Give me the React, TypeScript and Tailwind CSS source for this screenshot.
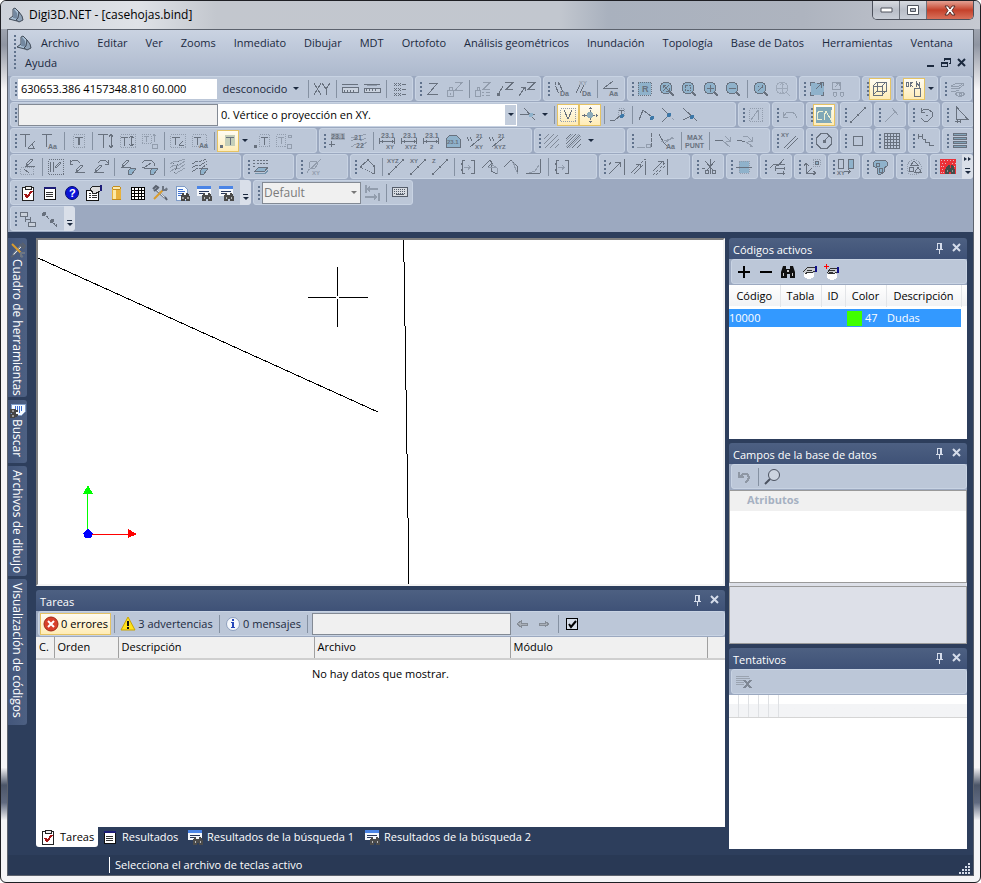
import type { ReactNode } from "react"
import { clsx } from "clsx"

const INK = "#68717e"
const SOFT = "#929dad"
const BLUE = "#8fb2cb"

interface StrokeProps {
  d: string
  c?: string
  w?: number
  f?: string
  dash?: string
}

function S({ d, c = INK, w = 1, f = "none", dash }: StrokeProps) {
  return <path d={d} stroke={c} strokeWidth={w} fill={f} strokeDasharray={dash} />
}

interface GlyphProps {
  x: number
  y: number
  s?: number
  c?: string
  children: string
}

function G({ x, y, s = 7, c = INK, children }: GlyphProps) {
  return (
    <text x={x} y={y} fontSize={s} fill={c} fontFamily="Liberation Sans, sans-serif" fontWeight="bold">
      {children}
    </text>
  )
}

const lens = (
  <>
    <circle cx="7" cy="7" r="6" fill={BLUE} stroke={INK} />
    <S d="M11 11l4 4" w={2} />
  </>
)
const parallel = <S d="M2.500 1v3M2.500 5l3 7M6 2l3.500 8M5.500 1v3" />
const binoculars = (
  <>
    <path d="M1 8l2-6h3v3h4v-3h3l2 6v6h-5v-4h-3v4h-6z" fill="#111" />
    <path d="M3 9h1v3h-1zM12 9h1v3h-1zM7 6h2v2h-2z" fill="#ccc" />
  </>
)
const sheetBinoculars = (
  <>
    <path d="M2 1h8l3 3v11h-11z" fill="#f6fbff" stroke="#7f9cc8" />
    <S d="M4 4.500h5M4 6.500h7M4 8.500h4M4 10.500h3" c="#3d6fd0" />
    <path d="M7 12l1-4h2v2h2v-2h2l2 4v4h-4v-2h-1v2h-4z" fill="#454545" />
    <path d="M8 12h2v2h-2zM13 12h2v2h-2z" fill="#999" />
  </>
)
const listBinoculars = (
  <>
    <path d="M1 1h14v10h-14z" fill="#f4f7fb" />
    <path d="M1 1h14v3h-14z" fill="#4a84e6" />
    <S d="M3 6.500h10M3 8.500h6" c="#26365c" />
    <path d="M6 12l1-4h2v2h3v-2h2l2 4v4h-4v-2h-2v2h-4z" fill="#4a4a4a" />
    <path d="M8 12h1v2h-1zM13 12h1v2h-1z" fill="#bbb" />
  </>
)
const clipboard = (
  <>
    <path d="M2.500 2.500h11v13h-11z" fill="#fff" stroke="#222" />
    <path d="M5 1h6v3h-6z" fill="#eee" stroke="#222" />
    <S d="M5 9l2 3l5-6" c="#a51616" w={2} />
  </>
)
const textBox = (
  <>
    <S d="M3.500 1.500h11v13h-11z" c={SOFT} dash="1 1" />
    <S d="M5 4.500h8M9.500 4v8M8.500 4v8" />
  </>
)
const dim = (
  <>
    <G x={2} y={5} s={7}>23.1</G>
    <S d="M.500 5v6M15.500 5v6M1 8.500h14M3 7v3M13 7v3" />
  </>
)
const pen = <S d="M5 9l5-5l2 1l-5 5zM4 11.500h10M5 11l2-1" />
const eraser = <path d="M8 12l3-3h4v2l-3 4h-4z" fill={BLUE} stroke={INK} />
const slants = <S d="M0 6l5-5M0 11l10-10M1 15l13-13M6 15l9-9M11 15l4-4" />
const toolsGlyph = (
  <>
    <S d="M4 5l9 8" c="#7b8491" w={2} />
    <S d="M4 4l10 10" c="#dfe3e8" />
    <S d="M11 5l-9 9" c="#d99b2e" w={2} />
    <S d="M1 4l3-3l3 2M2 6l4-3" c="#59616e" w={2} />
    <S d="M11 1v4h4M14 3l1 2" c="#6d7683" w={2} />
    <S d="M13 12l2 3" c="#59616e" w={2} />
  </>
)

const icons: Record<string, ReactNode> = {
  xy: <S d="M0 2l7 12M7 2l-7 12M8 2l4 6l4-6M12 8v6" />,
  ruler: (
    <>
      <path d="M0 6h16v5h-16z" fill="#cbd3df" stroke={INK} />
      <S d="M0 3.500h16M2.500 9v2M5.500 9v2M8.500 9v2M11.500 9v2" />
    </>
  ),
  rulerSplit: (
    <>
      <path d="M0 7h16v4h-16z" fill="#cbd3df" stroke={INK} />
      <S d="M0 3.500h16M2.500 8v2M5.500 8v2M8.500 8v2M11.500 8v2" />
      <S d="M3 4.500h10" c={SOFT} />
    </>
  ),
  xyzList: (
    <>
      <S d="M2 2l3 3M5 2l-3 3M6 2l3 3M9 2l-3 3M2 7l3 3M5 7l-3 3M6 7l3 3M9 7l-3 3M2 12l3 3M5 12l-3 3M6 12l3 3M9 12l-3 3" />
      <S d="M10 3.500h4M10 8.500h4M10 13.500h4" />
    </>
  ),
  z: <S d="M4 2.500h8l-9 11h10" />,
  lockZ: (
    <>
      <S d="M8 1.500h7l-7 8h8" c={SOFT} />
      <S d="M.500 9.500h6v6h-6zM2 9v-3h3v3M3.500 12v2" c={SOFT} />
    </>
  ),
  lockZList: (
    <>
      <S d="M8 1.500h7l-7 7h7" c={SOFT} />
      <S d="M.500 9.500h5v6h-5zM2 9v-3h2v3M7 11.500h2M11 11.500h4M7 14.500h2M11 14.500h4" c={SOFT} />
    </>
  ),
  arrowZ: (
    <>
      <S d="M8 1.500h8l-7 7h7M1 14l5-9" />
      <path d="M0 12h3v3h-3z" fill={INK} />
    </>
  ),
  arrowUpZ: <S d="M8 1.500h8l-7 7h7M0 15l6-9M6 10v-4h-4" />,
  parDa: (
    <>
      {parallel}
      <G x={7} y={15}>Da</G>
    </>
  ),
  parXyDa: (
    <>
      <S d="M1 12l4-8M5 12l4-8" />
      <G x={4} y={4} s={6} c={SOFT}>XY</G>
      <G x={7} y={15}>Da</G>
    </>
  ),
  angleAa: (
    <>
      <S d="M0 7.500h15M1 7l9-7" />
      <G x={6} y={15}>Aa</G>
    </>
  ),
  zoomR: (
    <>
      <path d="M1 1h13v13h-13z" fill={BLUE} stroke={INK} strokeDasharray="1 1" />
      <G x={5} y={11} s={9}>R</G>
    </>
  ),
  zoomAll: (
    <>
      {lens}
      <S d="M4 4l6 6M10 4l-6 6M4 7v-3h3M7 10h3v-3" />
    </>
  ),
  zoomBox: (
    <>
      {lens}
      <S d="M4.500 4.500h5v5h-5z" dash="2 1" />
    </>
  ),
  zoomIn: (
    <>
      {lens}
      <S d="M4 7.500h7M7.500 4v7" />
    </>
  ),
  zoomOut: (
    <>
      {lens}
      <S d="M4 7.500h7" />
    </>
  ),
  zoomBack: (
    <>
      {lens}
      <S d="M5 10l4-4M5 5l1 1M9 4v3" />
    </>
  ),
  pan: (
    <g opacity="0.7">
      <circle cx="7" cy="7" r="6" fill="none" stroke={SOFT} />
      <S d="M1 7.500h12M7.500 1v12M5 4l2-2l2 2M5 11l2 2l2-2M11 11l4 4" c={SOFT} />
    </g>
  ),
  extent: (
    <>
      <path d="M2 2h13v12h-13z" fill={BLUE} />
      <S d="M1.500 5v-4h4M14.500 5v-4h-4M1.500 11v3.500h3M14.500 11v3.500h-3M7 8l5-5M8 2.500h4.500v4" />
    </>
  ),
  extentEyes: (
    <>
      <S d="M1.500 1.500h8v7h-8zM4 6l4-4M5 2h3v3" c={SOFT} />
      <S d="M3 11h2l1 2l-1 2h-2l-1-2zM10 11h2l1 2l-1 2h-2l-1-2z" c={SOFT} />
    </>
  ),
  cube: <S d="M1.500 5.500h9v9h-9zM5.500 1.500h9v9h-9zM1 5l4-4M10 5l4-4M1 14l4-4M10 14l4-4" />,
  docN: (
    <>
      <S d="M0 1.500h2v4h-2zM4 1v5M4 3l3-2M4 3l3 3M10.500 6v-5l3 5v-5" />
      <path d="M8.500 7.500h6v8h-6z" fill="none" stroke={INK} />
    </>
  ),
  layersEye: (
    <>
      <S d="M1 5l6-3h7l-5 3zM1 7.500h8l5-4M1 10h5l3-1" c={SOFT} />
      <S d="M5 13l3-2h4l3 2l-3 2h-4zM9 12h2v2h-2z" c={SOFT} />
    </>
  ),
  cursorCut: (
    <>
      <S d="M0 7.500h15M4 1l11 12" />
      <circle cx="11" cy="8" r="2" fill={BLUE} />
    </>
  ),
  vBox: (
    <>
      <S d="M.500 1.500h15v13h-15z" c={SOFT} dash="1 1" />
      <S d="M4 3l4 9l4-9" />
    </>
  ),
  move: (
    <>
      <circle cx="8" cy="8" r="3" fill="#8cabba" />
      <S d="M8.500 0v5M8.500 11v5M0 8.500h5M11 8.500h5" dash="2 1" />
      <S d="M7 2l1-1l2 1M7 14l1 1l2-1M2 7v3M14 7v3" />
    </>
  ),
  nodeT: (
    <>
      <S d="M8.500 1.500h6v7h-6z" c={SOFT} dash="1 1" />
      <S d="M9 3.500h5M11.500 3v6M0 14l5-1l6-5" />
      <circle cx="12" cy="9" r="2" fill="#3d78a8" />
    </>
  ),
  vertexEnd: (
    <>
      <S d="M1 13l4-10l9 7" />
      <circle cx="14" cy="11" r="2" fill="#3d78a8" />
    </>
  ),
  vertexMid: (
    <>
      <S d="M2 1l7 7l-7 7" />
      <S d="M9 8l6 6" c={SOFT} dash="1 1" />
      <circle cx="9" cy="8" r="2" fill="#3d78a8" />
    </>
  ),
  vertexCross: (
    <>
      <S d="M1 1l14 13M1 13l8-4" />
      <circle cx="10" cy="10" r="2" fill="#3d78a8" />
    </>
  ),
  italicBox: (
    <>
      <S d="M1.500 1.500h13v13h-13z" c={SOFT} dash="1 1" />
      <S d="M3 13l7-10M10.500 3v10" c={SOFT} />
    </>
  ),
  undoPale: <S d="M1 5v5h5M1 10l4-5h5l3 2l2 4" c={SOFT} />,
  can: (
    <>
      <path d="M0 0h16v16h-16z" fill="#82a9b7" />
      <S d="M7 4h-4l-2 3v5h5M8 13v-4l2-5M10 4l5 9V3" c="#eff0d2" />
    </>
  ),
  segment: (
    <>
      <S d="M1 15l14-14" />
      <path d="M0 14h2v2h-2zM14 0h2v2h-2zM7 7h2v2h-2z" fill={INK} />
    </>
  ),
  segmentPale: <S d="M1 15l10-10M8 1l6 7" c={SOFT} />,
  rotate: <S d="M3 1v4h4M3 5l3-3h4l4 3v5l-4 4h-4l-3-3M7.500 8h2" />,
  mirror: <S d="M4.500 0v12h11zM5 13v3M8 12v4M3 14.500h5" />,
  tAngle: <S d="M0 1.500h10M5.500 1v13M8 15l7-7M8 15.500h7M12 11l2 4" />,
  tAa: (
    <>
      <S d="M0 1.500h10M4.500 1v13" />
      <G x={6} y={16}>Aa</G>
    </>
  ),
  tBox: textBox,
  tHeight: <S d="M0 1.500h10M5.500 1v14M13.500 1v14M11 4l2-3l2 3M11 12l2 3l2-3" />,
  tHeightBox: (
    <>
      <S d="M.500 1.500h15v13h-15z" c={SOFT} dash="1 1" />
      <S d="M1 4.500h7M4.500 4v9M11.500 3v10M9 5l2-2l3 2M9 11l2 2l3-2" />
    </>
  ),
  tCopy: (
    <>
      <S d="M0 1.500h9v9h-9z" c={SOFT} dash="1 1" />
      <S d="M2 3.500h5M4.500 3v6M12.500 1v8M11 3l1-2l2 2M10 11h5v4h-5z" c={SOFT} />
    </>
  ),
  tBoxAngle: (
    <>
      <S d="M.500 1.500h15v13h-15z" c={SOFT} dash="1 1" />
      <S d="M2 4.500h8M5.500 4v8M9 12l4-4M9 12.500h5" />
    </>
  ),
  tBoxAa: (
    <>
      <S d="M.500 1.500h14v12h-14z" c={SOFT} dash="1 1" />
      <S d="M2 4.500h7M5.500 4v8" />
      <G x={7} y={15}>Aa</G>
    </>
  ),
  tDot: (
    <>
      <path d="M5 2h10v11h-10z" fill="#c5cfb9" />
      <path d="M0 12h3v3h-3z" fill={INK} />
      <S d="M6 4.500h8M10.500 4v8" />
    </>
  ),
  tDotBox: (
    <>
      <S d="M5.500 1.500h10v12h-10z" c={SOFT} dash="1 1" />
      <path d="M0 12h3v3h-3z" fill={INK} />
      <S d="M7 4.500h7M10.500 4v8" />
    </>
  ),
  tPale: (
    <>
      <S d="M.500 1.500h9v12h-9z" c={SOFT} dash="1 1" />
      <S d="M2 4.500h6M5.500 4v7M12 2h3v2h-3zM11 11h4v4h-4z" c={SOFT} />
    </>
  ),
  numPlus: (
    <>
      <path d="M2 0h14v7h-14z" fill="#a3adbb" />
      <G x={2} y={6} s={7}>23.1</G>
      <S d="M2.500 8v6M0 11.500h6" />
    </>
  ),
  numStack: (
    <>
      <S d="M0 5l5-1M0 8l7-3M9 3l6-2M9 8l6-3M0 14l5-3M10 13l6-4" c={SOFT} />
      <G x={3} y={7} s={7}>21</G>
      <G x={5} y={15} s={7}>22</G>
    </>
  ),
  dimXy: (
    <>
      {dim}
      <G x={7} y={16} s={6}>XY</G>
    </>
  ),
  dimXyz: (
    <>
      {dim}
      <G x={4} y={16} s={6}>XYZ</G>
    </>
  ),
  dimZ: (
    <>
      {dim}
      <G x={7} y={16} s={6}>2</G>
    </>
  ),
  dome: (
    <>
      <path d="M1 14v-8l4-4h6l4 4v8z" fill={BLUE} stroke={INK} />
      <G x={2} y={11} s={6}>23.1</G>
    </>
  ),
  slopeXy: (
    <>
      <S d="M0 4l2 4M3 4l2 4M3 14l11-9" />
      <G x={9} y={5} s={6}>21</G>
      <G x={8} y={16} s={6}>XY</G>
    </>
  ),
  slopeXyz: (
    <>
      <S d="M0 4l2 4M3 4l2 4M3 14l11-9" />
      <G x={9} y={5} s={6}>21</G>
      <G x={5} y={16} s={6}>XYZ</G>
    </>
  ),
  hatch: <g opacity="0.7">{slants}</g>,
  hatchDense: (
    <>
      {slants}
      <S d="M0 8l7-7M0 14l13-13M3 15l12-12" c={SOFT} />
    </>
  ),
  perpend: (
    <>
      <S d="M0 14.500h9" c={SOFT} dash="8 1" />
      <S d="M9.500 11.500h4v3h-4z" c={SOFT} />
      <S d="M14.500 0v15" dash="4 1" />
    </>
  ),
  slopeAa: (
    <>
      <S d="M0 1l5 9l3 3" />
      <S d="M2 9l13-4M6 10l8-6" c={SOFT} />
      <G x={7} y={16}>Aa</G>
    </>
  ),
  maxPunt: (
    <>
      <G x={0} y={7} s={7}>MAX</G>
      <G x={-2} y={15} s={7}>PUNT</G>
    </>
  ),
  bend: (
    <>
      <S d="M0 7.500h8" />
      <S d="M8 8l7 6M10 3l5 5M15 4v4h-4" c={SOFT} />
    </>
  ),
  bendDouble: (
    <>
      <S d="M0 7.500h5M5 8l3 1" />
      <S d="M6 3h4l5 5M15 4v4h-4M9 9l6 4M13 13h3" c={SOFT} />
    </>
  ),
  xyLines: (
    <>
      <G x={-1} y={4} s={6}>XY</G>
      <S d="M2 15l12-12M5 16l11-11" />
    </>
  ),
  circle: (
    <>
      <S d="M5 .500h6l4.500 4.500v6l-4.500 4.500h-6l-4.500-4.500v-6z" />
      <S d="M8 8l5-5" />
      <path d="M7 7h3v3h-3z" fill={INK} />
    </>
  ),
  square: <S d="M3.500 3.500h9v9h-9z" />,
  gridIcon: (
    <S d="M.500 .500h15v15h-15zM3.500 0v16M6.500 0v16M9.500 0v16M12.500 0v16M0 3.500h16M0 6.500h16M0 9.500h16M0 12.500h16" />
  ),
  stairs: <S d="M.500 1v5M4.500 1v5M0 3.500h5M5 6.500h2v3h4v3h5" />,
  stripes: (
    <path
      d="M1.500 .500h13v2h-13zM1.500 4.500h13v2h-13zM1.500 8.500h13v2h-13zM1.500 12.500h13v2h-13z"
      fill="#83a4b9"
      stroke={INK}
    />
  ),
  penBox: (
    <>
      <g transform="translate(1 -4)">{pen}</g>
      <S d="M.500 8.500h13v7h-13z" c={SOFT} dash="1 1" />
      <S d="M4 10l5 4" />
    </>
  ),
  penSquare: (
    <>
      <S d="M.500 .500h15v15h-15z" dash="1 1" />
      <S d="M2.500 3v10M5.500 3v10M7 8l5-5l1 1l-5 5z" />
    </>
  ),
  penUndo: (
    <>
      <g transform="translate(1 2)">{pen}</g>
      <S d="M0 4l3-3h4l3 3M0 1v4h3" />
    </>
  ),
  penRedo: (
    <>
      <g transform="translate(-2 2)">{pen}</g>
      <S d="M6 4l3-3h4l3 3M16 1v4h-3" />
    </>
  ),
  penErase: (
    <>
      <g transform="translate(-3 -3)">{pen}</g>
      {eraser}
    </>
  ),
  penLoopErase: (
    <>
      <S d="M0 4l3-3h6l3 3v3M0 8h3M3 8l6-4" />
      <S d="M2 9.500h8" />
      {eraser}
    </>
  ),
  contours: (
    <>
      <S d="M0 5l5-3h4l6-2M0 9l4-3h5l6-4M0 13l5-4h5l5-4M5 15l5-3l5-3" c={SOFT} />
      <S d="M3 4l6 10M9 2l-5 12" c={INK} dash="1 2" />
    </>
  ),
  contoursErase: (
    <>
      <S d="M0 5l5-3h4l6-2M0 9l4-3h5l6-4M0 13l5-4h5l5-4" c={INK} dash="3 1" />
      {eraser}
    </>
  ),
  layers: (
    <>
      <S d="M0 1.500h2M4 1.500h11M0 4.500h2M4 4.500h11M0 7.500h2" dash="2 1" />
      <path d="M2 12l4-4h9l-3 4z" fill={BLUE} stroke={INK} />
      <path d="M2 14h10l3-4v2l-3 3h-10z" fill="#7494ac" />
    </>
  ),
  curveXy: (
    <>
      <S d="M1 14l2-4M3 4l2-2h5l2 3l-3 4h-5l-1-3zM15 0l-13 12" c={SOFT} />
      <G x={6} y={16} s={6} c={SOFT}>XY</G>
    </>
  ),
  polygon: (
    <>
      <S d="M0 8l8-7l6 6v8" />
      <S d="M0 8l14 7" dash="1 1" />
      <path d="M7 0h2v2h-2zM13 6h2v2h-2zM0 7h2v2h-2z" fill={INK} />
    </>
  ),
  lineXyz: (
    <>
      <S d="M1 15l14-14" />
      <path d="M0 14h2v2h-2zM14 0h2v2h-2zM7 7h2v2h-2z" fill={INK} />
      <G x={-1} y={4} s={6}>XYZ</G>
    </>
  ),
  lineXy: (
    <>
      <S d="M1 15l14-14" />
      <path d="M0 14h2v2h-2zM14 0h2v2h-2zM7 7h2v2h-2z" fill={INK} />
      <G x={0} y={4} s={6}>XY</G>
    </>
  ),
  lineZ: (
    <>
      <S d="M1 15l14-14" />
      <path d="M0 14h2v2h-2zM14 0h2v2h-2zM7 7h2v2h-2z" fill={INK} />
      <G x={0} y={4} s={6}>Z</G>
    </>
  ),
  bracketJoin: (
    <>
      <S d="M5 1.500h-3v13h3M11 1.500h3v13h-3M1.500 4v2M1.500 10v2M14.500 4v2M14.500 10v2" />
      <S d="M4 8.500h7M8 6l2 2l-2 3" c={SOFT} />
    </>
  ),
  vertexMove: (
    <>
      <S d="M0 9l8-8l3 4M6 8l3-3v7l6 3" />
      <S d="M6 8.500h9M9 5l6 4v6" c={SOFT} />
    </>
  ),
  vertexPull: (
    <>
      <S d="M0 8l7-7l6 6v8" />
      <S d="M8 2l6 13M10 4v4" c={SOFT} />
    </>
  ),
  corner: (
    <>
      <S d="M0 14.500h14M14.500 0v14" />
      <S d="M3 14l6-2l4-6" c={SOFT} />
    </>
  ),
  arrowWall: <S d="M0 15l11-11M6 3.500h5M11 3v5M15.500 0v16M0 6l2-3" />,
  arrowsWall: (
    <>
      <S d="M0 14l9-9M5 5h4v4M3 15l9-9M14.500 3v13" />
      <S d="M10 4l4-4M14 0v3" c={INK} dash="1 1" />
    </>
  ),
  arrowsDash: (
    <>
      <S d="M0 12l10-10M5 2h5v4M14.500 0v16" />
      <S d="M0 16l13-13M3 16l9-9" dash="1 1" />
    </>
  ),
  scissors: <S d="M3 2l8 9M13 2l-8 9M8.500 0v15M3 11h3v3h-3zM10 11h3v3h-3zM0 9h3" />,
  splitBlue: (
    <>
      <path d="M3 2h10v12h-10z" fill={BLUE} stroke={SOFT} strokeDasharray="1 1" />
      <S d="M0 8.500h16" />
    </>
  ),
  stepArrows: <S d="M0 9l4-4l4 2l6-7M6 5h9M6 9.500h8M6 7l-1 2l1 3M14 8v3M7 14h8M13 12v4" />,
  moveOrigin: (
    <>
      <S d="M2.500 15v-10M0 7l2-3l3 3M2 14.500h9M9 12l3 2l-3 2M3 14l5-5" />
      <path d="M9 0h7v7h-7z" fill="none" stroke={SOFT} strokeDasharray="1 1" />
      <path d="M11 2h3v3h-3z" fill={BLUE} stroke={INK} />
    </>
  ),
  swapXy: (
    <>
      <S d="M.500 .500h5v9h-5z" />
      <path d="M10.500 .500h5v9h-5z" fill={BLUE} stroke={INK} />
      <S d="M6 12.500h7M10 10l2 2l-2 3" />
      <G x={-1} y={16} s={6}>XY</G>
    </>
  ),
  blob: (
    <>
      <path d="M1 4l3-3l4 1l5-1l2 2v4l-3 2v4l-3 2h-3l-1-6l-4-2z" fill={BLUE} stroke={INK} />
      <S d="M4 4h3v3h-3zM7 9h3v4h-3z" />
    </>
  ),
  shapes: (
    <>
      <S d="M1 6l3-4l4-2l5 3l3 5l-3 6l-5 2l-5-1l-2-5z" c={SOFT} dash="1 1" />
      <S d="M5 6l3-4l4 4zM3.500 8.500h4v4h-4zM9 13l3-5l3 5z" />
    </>
  ),
  redGrid: (
    <>
      <path d="M0 0h16v15h-16z" fill="#ea3038" />
      <path
        d="M1 1h1v1h-1zM4 1h1v1h-1zM7 1h1v1h-1zM10 1h1v1h-1zM13 1h1v1h-1zM2 4h1v1h-1zM5 4h1v1h-1zM12 4h1v1h-1zM15 4h1v1h-1zM1 7h1v1h-1zM3 7h1v1h-1zM14 7h1v1h-1zM2 10h1v1h-1zM1 13h1v1h-1zM3 13h1v1h-1z"
        fill="#e0b6bf"
      />
      <path d="M5 15v-4l3-5h2v3h1v-3h2l2 5v4h-4v-2h-2v2z" fill="#444c4a" />
      <path d="M7 11h1v2h-1zM12 11h1v2h-1z" fill="#8d9895" />
    </>
  ),
  clipboard,
  sheet: (
    <>
      <path d="M2.500 2.500h11v12h-11z" fill="#fff" stroke="#111" />
      <path d="M2 2h12v2h-12z" fill="#1c1c78" />
      <S d="M4 7.500h7M4 9.500h7M4 11.500h7" c="#333" />
    </>
  ),
  help: (
    <>
      <circle cx="8" cy="8" r="6.500" fill="#0a14d8" stroke="#040a6e" />
      <G x={5} y={12} s={11} c="#fff">?</G>
    </>
  ),
  form: (
    <>
      <path d="M.500 5.500h12v10h-12z" fill="#fff" stroke="#111" />
      <S d="M3 8.500h2M6 8.500h5M3 10.500h2M6 10.500h5M3 12.500h2M6 12.500h5" c="#333" />
      <path d="M4 4l3-3h5l2 1v4l-4 2h-3z" fill="#ddd" stroke="#222" />
      <path d="M14 0h2v6h-2z" fill="#1c1c78" />
    </>
  ),
  cylinder: (
    <>
      <path d="M4 3h9v11h-9z" fill="#e8b23c" />
      <path d="M5 3h3v11h-3z" fill="#fce9a5" />
      <ellipse cx="8.500" cy="3" rx="4.500" ry="1.500" fill="#fbe9ad" stroke="#c48d1d" />
      <S d="M4 14.500h9" c="#c48d1d" />
    </>
  ),
  table: (
    <>
      <path d="M1.500 2.500h13v12h-13z" fill="#fff" stroke="#000" />
      <S d="M4.500 2v12M8.500 2v12M11.500 2v12M1 5.500h13M1 8.500h13M1 11.500h13" c="#000" />
    </>
  ),
  tools: toolsGlyph,
  sheetBinoculars,
  listBinoculars,
  exchange: (
    <>
      <path d="M2 4l4-3v6zM14 12l-4-3v6z" fill={SOFT} />
      <S d="M1.500 0v8M5 4h9M14.500 8v8M1 12h10" c={SOFT} w={2} />
    </>
  ),
  keyboard: (
    <>
      <path d="M.500 2.500h15v9h-15z" fill="#d7dbe1" stroke="#555d6a" />
      <S d="M2 4.500h12M2 6.500h12M2 8.500h12" c="#555d6a" dash="1 1" />
      <S d="M4 9.500h8" c="#555d6a" />
    </>
  ),
  boxes: (
    <>
      <path d="M.500 1.500h7v4h-7zM8.500 11.500h7v4h-7z" fill="#c9d0da" stroke={INK} />
      <S d="M5 8.500h6M6 6l-1 2l1 3M10 6l1 2l-1 3" />
    </>
  ),
  chain: (
    <>
      <S d="M2 3l5 4M9 10l6 5" w={2} dash="2 1" />
      <circle cx="2" cy="3" r="2" fill={INK} />
      <circle cx="10" cy="10" r="2" fill={INK} />
    </>
  ),
  binoculars,
  plus: <path d="M7 2h2v5h5v2h-5v5h-2v-5h-5v-2h5z" fill="#000" />,
  minus: <path d="M2 7h12v2h-12z" fill="#000" />,
  hand: (
    <>
      <ellipse cx="7" cy="11" rx="5" ry="4" fill="#fdfdfd" />
      <path d="M1 8l5-5h7v4l-4 2l-3-1l-3 2z" fill="#c9ccd0" />
      <S d="M1 8l5-5h7M13 7l-4 2l-3-1l-3 2M5 6h5M4 8h4" c="#333" />
      <path d="M13 2h2v6h-2z" fill="#11118a" />
    </>
  ),
  handPlus: (
    <>
      <ellipse cx="8" cy="12" rx="5" ry="4" fill="#fdfdfd" />
      <path d="M3 9l4-5h6v4l-4 2l-3-1l-2 1z" fill="#c9ccd0" />
      <S d="M3 9l4-5h6M13 8l-4 2l-3-1l-2 1M6 6h5M5 8h4" c="#333" />
      <path d="M13 3h2v6h-2z" fill="#11118a" />
      <S d="M2.500 0v5M0 2.500h5" c="#f00" />
    </>
  ),
  undoBold: <S d="M3 3v5h5M4 8l3-3h4l2 3l-1 3l-3 3" c="#8e97a4" w={2} />,
  magnifier: (
    <>
      <circle cx="10" cy="6" r="5.500" fill="#ccd4e0" stroke="#4b5260" />
      <S d="M6 10l-5 5" c="#4b5260" w={2} />
    </>
  ),
  deleteRows: (
    <>
      <S d="M0 2.500h13M0 4.500h14M0 6.500h10M0 8.500h8M0 10.500h8" c="#9aa3b0" />
      <S d="M8 6l7 8M15 6l-7 8" c="#7f8895" w={2} />
    </>
  ),
  error: (
    <>
      <circle cx="8" cy="8" r="7" fill="#d8402a" stroke="#9c2a18" />
      <S d="M5 5l6 6M11 5l-6 6" c="#fff" w={2} />
    </>
  ),
  warning: (
    <>
      <path d="M8 1l7 13h-14z" fill="#ffe21a" stroke="#c9a400" />
      <path d="M7 5h2v5h-2zM7 11h2v2h-2z" fill="#111" />
    </>
  ),
  info: (
    <>
      <circle cx="8" cy="8" r="6.500" fill="#f4f7fc" stroke="#8ea0be" />
      <path d="M7 3h2v2h-2zM7 6h2v6h-2zM6 6h1v1h-1zM6 11h4v1h-4z" fill="#2546b8" />
    </>
  ),
  arrowLeft: <path d="M3 8l4-3v2h6v2h-6v2z" fill="#a9afb8" stroke="#858c96" />,
  arrowRight: <path d="M13 8l-4-3v2h-6v2h6v2z" fill="#a9afb8" stroke="#858c96" />,
}

const SMOOTH = new Set(["help", "error", "warning", "info", "magnifier", "tools", "binoculars"])

function Icon({ name }: { name: string }) {
  return (
    <svg
      width="16"
      height="16"
      viewBox="0 0 16 16"
      aria-hidden="true"
      className="shrink-0 overflow-visible"
      shapeRendering={SMOOTH.has(name) ? "auto" : "crispEdges"}
    >
      {icons[name]}
    </svg>
  )
}

function Logo() {
  return (
    <svg width="16" height="16" viewBox="0 0 16 16" aria-hidden="true" className="shrink-0">
      <path d="M1 12l4-3v-7l2-1l4 4l2 8l-4 1z" fill="#a9c0d6" stroke="#414b58" />
      <path d="M6 2l3 4l1 6l-5-1z" fill="#7388a0" />
      <path d="M11 5l3 4l1 4l-4 2l-3-2l2-2z" fill="#8fa3b8" stroke="#414b58" />
    </svg>
  )
}

function Caret({ className = "text-[#1b293e]" }: { className?: string }) {
  return (
    <svg width="6" height="4" viewBox="0 0 6 4" aria-hidden="true" className={clsx("shrink-0", className)}>
      <path d="M0 0h6l-3 3z" fill="currentColor" />
    </svg>
  )
}

function Grip({ tall }: { tall?: boolean }) {
  return (
    <span
      className={clsx(
        "ml-1 w-[2px] shrink-0 bg-[repeating-linear-gradient(to_bottom,#60728c_0,#60728c_2px,transparent_2px,transparent_4px)]",
        tall ? "h-[34px]" : "h-[14px]",
      )}
    />
  )
}

function Divider() {
  return (
    <span className="flex h-[18px] w-[6px] shrink-0 justify-center">
      <span className="w-px bg-[#8591a2]" />
    </span>
  )
}

function ToolButton({ name, active }: { name: string; active?: boolean }) {
  return (
    <button
      type="button"
      aria-label={name}
      className={clsx(
        "flex h-[22px] w-[22px] shrink-0 items-center justify-center",
        active && "border border-[#e5c365] bg-linear-to-b from-[#fffcf2] to-[#ffecb5]",
      )}
    >
      <Icon name={name} />
    </button>
  )
}

function Overflow({ more }: { more?: boolean }) {
  return (
    <button
      type="button"
      aria-label="Opciones"
      className="-my-px -mr-px ml-auto flex h-[25px] w-[11px] shrink-0 flex-col items-center justify-end gap-[2px] rounded-r-sm bg-[#d9dfe9] pb-1"
    >
      {more && (
        <svg width="7" height="5" viewBox="0 0 7 5" aria-hidden="true" className="mb-1">
          <path d="M0 0l3 2l-3 2zM4 0l3 2l-3 2z" fill="#1b293e" />
        </svg>
      )}
      <span className="h-px w-[5px] bg-[#1b293e]" />
      <Caret />
    </button>
  )
}

interface BarProps {
  className?: string
  tools?: string
  children?: ReactNode
}

// tools is a space separated list: "|" is a divider, "v" a drop-down arrow, "*name" a pressed button
function Bar({ className = "w-8", tools = "", children }: BarProps) {
  return (
    <div
      role="toolbar"
      className={clsx(
        "flex h-[25px] shrink-0 items-center rounded-[3px] border border-[#c8d3e3] bg-[#bcc7d8]",
        className,
      )}
    >
      <Grip />
      {!children && <Tools list={tools} />}
      {children}
    </div>
  )
}

function Tools({ list }: { list: string }) {
  return (
    <>
      {list.split(" ").map((tool, i) => {
        if (tool === "|") return <Divider key={i} />
        if (tool === "v") {
          return (
            <button key={i} type="button" aria-label="Más" className="flex h-[22px] w-3 shrink-0 items-center justify-center">
              <Caret />
            </button>
          )
        }
        const active = tool.startsWith("*")
        return <ToolButton key={i} name={active ? tool.slice(1) : tool} active={active} />
      })}
    </>
  )
}

function ToolRow({ children }: { children: ReactNode }) {
  return <div className="flex gap-[2px]">{children}</div>
}

const MENUS = [
  "Archivo",
  "Editar",
  "Ver",
  "Zooms",
  "Inmediato",
  "Dibujar",
  "MDT",
  "Ortofoto",
  "Análisis geométricos",
  "Inundación",
  "Topología",
  "Base de Datos",
  "Herramientas",
  "Ventana",
]

function TitleBar() {
  return (
    <header className="flex h-7 shrink-0 items-start bg-[linear-gradient(to_right,#cdd2da_0%,#dfe2e7_14%,#c3c7ce_22%,#c2c7cf_57%,#a9b1be_62%,#aeb4bf_82%,#c6c9d1_100%)] pl-[7px]">
      <div className="flex h-[27px] items-center gap-[5px]">
        <Logo />
        <h1 className="text-xs text-black">Digi3D.NET - [casehojas.bind]</h1>
      </div>
      <div className="mr-[6px] ml-auto flex h-[19px] overflow-hidden rounded-b-[5px] border border-t-0 border-[#4c515c]">
        <button type="button" aria-label="Minimizar" className="flex w-[27px] items-center justify-center border-r border-[#6c717b] bg-linear-to-b from-[#d7dae0] via-[#b9bec8] via-50% to-[#c9ced7]">
          <svg width="13" height="6" viewBox="0 0 13 6" aria-hidden="true">
            <path d="M1 1h11v4h-11z" fill="#fff" stroke="#50555f" />
          </svg>
        </button>
        <button type="button" aria-label="Maximizar" className="flex w-[27px] items-center justify-center border-r border-[#6c717b] bg-linear-to-b from-[#d7dae0] via-[#b9bec8] via-50% to-[#c9ced7]">
          <svg width="12" height="10" viewBox="0 0 12 10" aria-hidden="true">
            <path d="M.5 .5h11v9h-11z" fill="#fff" stroke="#50555f" />
            <path d="M3.500 3.500h5v3h-5z" fill="#b9bec8" stroke="#50555f" />
          </svg>
        </button>
        <button type="button" aria-label="Cerrar" className="flex w-[46px] items-center justify-center bg-linear-to-b from-[#e3a093] via-[#c4402a] via-50% to-[#d9705a]">
          <svg width="12" height="11" viewBox="0 0 12 11" aria-hidden="true">
            <path d="M1 1h3l2 3l2-3h3l-3 4.500l3 4.500h-3l-2-3l-2 3h-3l3-4.500z" fill="#fff" stroke="#59302c" />
          </svg>
        </button>
      </div>
    </header>
  )
}

function MenuBar() {
  return (
    <nav className="flex h-[46px] shrink-0 items-start bg-linear-to-b from-[#cad3e2] to-[#adb9cd] pt-[3px] pl-[2px] text-[#1b293e]">
      <div className="mt-[2px] flex">
        <Grip tall />
      </div>
      <div className="flex-1">
        <div className="flex h-5 items-center">
          <Logo />
          {MENUS.map((menu) => (
            <button key={menu} type="button" className="px-[9px] whitespace-nowrap">
              {menu}
            </button>
          ))}
        </div>
        <div className="flex h-5 items-center">
          <button type="button" className="px-[9px]">Ayuda</button>
          <div className="mr-[6px] ml-auto flex items-center gap-[6px]">
            <button type="button" aria-label="Minimizar documento">
              <svg width="9" height="10" viewBox="0 0 9 10" aria-hidden="true">
                <path d="M1 7h7v2h-7z" fill="#1b293e" />
              </svg>
            </button>
            <button type="button" aria-label="Restaurar documento">
              <svg width="10" height="10" viewBox="0 0 10 10" aria-hidden="true" shapeRendering="crispEdges">
                <path d="M3 3v-3h7v6h-2v-1h1v-3h-5v1zM0 4h7v5h-7zM1 6h5v2h-5z" fill="#1b293e" fillRule="evenodd" />
              </svg>
            </button>
            <button type="button" aria-label="Cerrar documento">
              <svg width="10" height="10" viewBox="0 0 10 10" aria-hidden="true">
                <path d="M1 1l7 7M8 1l-7 7" stroke="#1b293e" strokeWidth="2" />
              </svg>
            </button>
          </div>
        </div>
      </div>
    </nav>
  )
}

function Toolbars() {
  return (
    <div className="flex shrink-0 flex-col gap-px overflow-hidden bg-[#9ca9c0] pb-px pl-[2px] text-[#1b293e]">
      <ToolRow>
        <Bar className="w-[403px]">
          <input
            aria-label="Coordenadas"
            defaultValue="630653.386 4157348.810 60.000"
            className="ml-px h-5 w-[199px] shrink-0 bg-white px-[3px] text-black"
          />
          <button type="button" className="flex w-[88px] shrink-0 items-center justify-center gap-[6px]">
            desconocido
            <Caret />
          </button>
          <Tools list="| xy | ruler rulerSplit | xyzList" />
        </Bar>
        <Bar className="w-[126px]" tools="z lockZ | lockZList arrowZ arrowUpZ" />
        <Bar className="w-[82px]" tools="parDa parXyDa | angleAa" />
        <Bar className="w-[170px]" tools="zoomR zoomAll zoomBox zoomIn zoomOut | zoomBack pan" />
        <Bar className="w-[61px]" tools="extent extentEyes" />
        <Bar tools="*cube" />
        <Bar className="w-[42px]" tools="*docN v" />
        <Bar tools="layersEye" />
      </ToolRow>
      <ToolRow>
        <Bar className="w-[726px]">
          <input
            aria-label="Comando"
            className="ml-px h-[22px] w-[200px] shrink-0 border border-[#838a94] bg-[#f0f0f0] px-[3px]"
          />
          <div className="relative h-[22px] w-[299px] shrink-0 text-black">
            <select aria-label="Modo de proyección" className="h-full w-full appearance-none border border-white bg-white px-[2px]">
              <option>0. Vértice o proyección en XY.</option>
            </select>
            <span className="pointer-events-none absolute inset-y-px right-px flex w-[11px] items-center justify-center bg-[#c3cddc]">
              <Caret />
            </span>
          </div>
          <Tools list="cursorCut v | *vBox *move | nodeT | vertexEnd vertexMid vertexCross" />
        </Bar>
        <Bar tools="italicBox" />
        <Bar tools="undoPale" />
        <Bar tools="*can" />
        <Bar tools="segment" />
        <Bar tools="segmentPale" />
        <Bar tools="rotate" />
        <Bar tools="mirror" />
      </ToolRow>
      <ToolRow>
        <Bar
          className="w-[307px]"
          tools="tAngle tAa | tBox | tHeight tHeightBox tCopy | tBoxAngle tBoxAa | *tDot v tDotBox tPale"
        />
        <Bar className="w-[213px]" tools="numPlus numStack | dimXy dimXyz dimZ dome slopeXy slopeXyz" />
        <Bar className="w-[91px]" tools="hatch hatchDense v" />
        <Bar className="w-[143px]" tools="perpend slopeAa | maxPunt | bend bendDouble" />
        <Bar tools="xyLines" />
        <Bar tools="circle" />
        <Bar tools="square" />
        <Bar tools="gridIcon" />
        <Bar tools="stairs" />
        <Bar tools="stripes" />
      </ToolRow>
      <ToolRow>
        <Bar
          className="w-[231px]"
          tools="penBox | penSquare penUndo penRedo | penErase penLoopErase | contours contoursErase"
        />
        <Bar className="w-[51px]" tools="layers" />
        <Bar className="w-[52px]" tools="curveXy" />
        <Bar
          className="w-[247px]"
          tools="polygon | lineXyz lineXy lineZ | bracketJoin vertexMove vertexPull corner | bracketJoin"
        />
        <Bar className="w-[91px]" tools="arrowWall arrowsWall arrowsDash" />
        <Bar tools="scissors" />
        <Bar tools="splitBlue" />
        <Bar tools="stepArrows" />
        <Bar tools="moveOrigin" />
        <Bar tools="swapXy" />
        <Bar tools="blob" />
        <Bar tools="shapes" />
        <Bar className="w-[43px]">
          <ToolButton name="redGrid" />
          <Overflow more />
        </Bar>
      </ToolRow>
      <ToolRow>
        <Bar className="w-[241px]">
          <Tools list="clipboard sheet help form cylinder table tools sheetBinoculars listBinoculars listBinoculars" />
          <Overflow />
        </Bar>
        <Bar className="w-[160px]">
          <div className="relative ml-[2px] h-[22px] w-[99px] shrink-0">
            <select aria-label="Perfil" className="h-full w-full appearance-none border border-[#838a94] bg-[#f0f0f0] px-px text-xs text-[#7b7b7b]">
              <option>Default</option>
            </select>
            <span className="pointer-events-none absolute inset-y-px right-1 flex items-center">
              <Caret className="text-[#777]" />
            </span>
          </div>
          <Tools list="exchange | keyboard" />
        </Bar>
      </ToolRow>
      <ToolRow>
        <Bar className="w-[65px]">
          <Tools list="boxes chain" />
          <Overflow />
        </Bar>
      </ToolRow>
    </div>
  )
}

function SideTab({ label, icon, className }: { label: string; icon?: string; className: string }) {
  return (
    <button
      type="button"
      className={clsx(
        "flex w-[19px] flex-col items-center rounded-r-[3px] bg-linear-to-r from-[#43567b] to-[#4d6082] text-white",
        className,
      )}
    >
      {icon && (
        <span className="mb-px rotate-90">
          <Icon name={icon} />
        </span>
      )}
      <span className="text-xs leading-[19px] whitespace-nowrap [writing-mode:vertical-rl]">{label}</span>
    </button>
  )
}

function PanelTitle({ title }: { title: string }) {
  return (
    <div className="flex h-[21px] shrink-0 items-center rounded-t-[3px] bg-linear-to-b from-[#4d6082] to-[#3f5277] pr-[5px] pl-1 text-white">
      <h2 className="pt-[2px]">{title}</h2>
      <div className="mb-px ml-auto flex items-center gap-2">
        <button type="button" aria-label={`Anclar ${title}`}>
          <svg width="9" height="11" viewBox="0 0 9 11" aria-hidden="true" shapeRendering="crispEdges">
            <path d="M2.500 6v-5.500h4v6M5.500 0v7M1 6.500h7M4.500 7v4" fill="none" stroke="#d5dcea" />
          </svg>
        </button>
        <button type="button" aria-label={`Cerrar ${title}`}>
          <svg width="10" height="10" viewBox="0 0 10 10" aria-hidden="true">
            <path d="M1 1l7 7M8 1l-7 7" stroke="#d5dcea" strokeWidth="2" />
          </svg>
        </button>
      </div>
    </div>
  )
}

function PanelBar({ children }: { children: ReactNode }) {
  return (
    <div className="flex h-[26px] shrink-0 bg-[#9ca9c0] pb-px pl-[2px]">
      <div className="flex flex-1 items-center rounded-[3px] border border-[#c8d3e3] bg-[#bcc7d8] pl-px text-[#1b293e]">
        {children}
      </div>
    </div>
  )
}

function Drawing() {
  return (
    <div className="min-h-0 flex-[344] overflow-hidden border-2 border-t-[#808080] border-r-[#f4f4f4] border-b-[#f4f4f4] border-l-[#808080] bg-white">
      <svg width="685" height="344" viewBox="38 240 685 344" shapeRendering="crispEdges" className="block">
        <path d="M38 258L378 412" stroke="#000" fill="none" />
        <path
          d="M403.500 240v22M404.500 262v64M405.500 326v64M406.500 390v64M407.500 454v64M408.500 518v66"
          stroke="#000"
          fill="none"
        />
        <path d="M308 297.500h28M339 297.500h29M337.500 267v29M337.500 299v28" stroke="#000" fill="none" />
        <path d="M87.500 493v38" stroke="#0f0" />
        <path d="M88 485l5 9h-10z" fill="#0f0" />
        <path d="M92 534h37" stroke="#f00" />
        <path d="M137 534l-9 4v-9z" fill="#f00" />
        <path d="M88 529l5 4l-2 5h-6l-2-5z" fill="#00f" />
      </svg>
    </div>
  )
}

const FILTERS = [
  { icon: "error", label: "0 errores", active: true, className: "w-[71px]" },
  { icon: "warning", label: "3 advertencias", active: false, className: "w-[99px]" },
  { icon: "info", label: "0 mensajes", active: false, className: "w-[82px]" },
]

function Tasks() {
  return (
    <section className="flex min-h-0 flex-[259] flex-col">
      <PanelTitle title="Tareas" />
      <PanelBar>
        {FILTERS.map((filter) => (
          <div key={filter.label} className="flex items-center">
            <button
              type="button"
              className={clsx(
                "flex h-[22px] items-center justify-center gap-[2px] whitespace-nowrap",
                filter.className,
                filter.active && "border border-[#e5c365] bg-linear-to-b from-[#fffcf2] to-[#ffecb5] text-black",
              )}
            >
              <Icon name={filter.icon} />
              {filter.label}
            </button>
            <Divider />
          </div>
        ))}
        <input
          aria-label="Buscar tareas"
          className="ml-[2px] h-[22px] w-[199px] border border-[#838a94] bg-[#f0f0f0] px-1"
        />
        <Tools list="arrowLeft arrowRight |" />
        <label className="relative ml-[5px] flex h-3 w-3">
          <input
            type="checkbox"
            aria-label="Mostrar completadas"
            defaultChecked
            className="peer h-3 w-3 appearance-none border border-black bg-[#d5dce7]"
          />
          <svg
            width="12"
            height="12"
            viewBox="0 0 12 12"
            aria-hidden="true"
            className="pointer-events-none absolute inset-0 hidden peer-checked:block"
          >
            <path d="M3 6l2 3l5-6" fill="none" stroke="#000" strokeWidth="2" />
          </svg>
        </label>
      </PanelBar>
      <div className="min-h-0 flex-1 bg-white">
        <table className="w-full table-fixed border-collapse text-black">
          <thead>
            <tr className="h-[22px] border-b-2 border-[#cfcfcf] bg-[#f0f0f0] text-left">
              <th className="w-[18px] border-r border-[#a0a0a0] pb-[2px] pl-[3px] font-normal">C.</th>
              <th className="w-16 border-r border-[#a0a0a0] pb-[2px] pl-[3px] font-normal">Orden</th>
              <th className="w-[196px] border-r border-[#a0a0a0] pb-[2px] pl-[3px] font-normal">Descripción</th>
              <th className="w-[196px] border-r border-[#a0a0a0] pb-[2px] pl-[3px] font-normal">Archivo</th>
              <th className="w-[197px] border-r border-[#a0a0a0] pb-[2px] pl-[3px] font-normal">Módulo</th>
              <th aria-label="Vacía" />
            </tr>
          </thead>
          <tbody>
            <tr>
              <td colSpan={6} className="pt-[6px] text-center">
                No hay datos que mostrar.
              </td>
            </tr>
          </tbody>
        </table>
      </div>
      <div className="flex h-[22px] shrink-0 items-start text-white">
        <button type="button" className="flex h-5 w-[62px] items-center gap-1 rounded-b-[3px] bg-white pl-1 text-black">
          <Icon name="clipboard" />
          Tareas
        </button>
        <button type="button" className="flex h-5 w-[89px] items-center gap-1 pl-1 whitespace-nowrap">
          <Icon name="sheet" />
          Resultados
        </button>
        <button type="button" className="flex h-5 w-[177px] items-center gap-1 whitespace-nowrap">
          <Icon name="listBinoculars" />
          Resultados de la búsqueda 1
        </button>
        <button type="button" className="flex h-5 items-center gap-1 whitespace-nowrap">
          <Icon name="listBinoculars" />
          Resultados de la búsqueda 2
        </button>
      </div>
    </section>
  )
}

function ActiveCodes() {
  return (
    <section className="flex min-h-0 flex-1 flex-col">
      <PanelTitle title="Códigos activos" />
      <PanelBar>
        <Tools list="plus minus binoculars hand handPlus" />
      </PanelBar>
      <div className="min-h-0 flex-1 bg-white">
        <table className="w-full table-fixed border-collapse">
          <thead className="text-black">
            <tr className="h-[23px] border-b-2 border-white bg-linear-to-b from-white to-[#f1f2f4]">
              <th className="w-[51px] border-r border-[#e3e5e8] font-normal">Código</th>
              <th className="w-[41px] border-r border-[#e3e5e8] font-normal">Tabla</th>
              <th className="w-6 border-r border-[#e3e5e8] font-normal">ID</th>
              <th className="w-[41px] border-r border-[#e3e5e8] font-normal">Color</th>
              <th className="w-[75px] border-r border-[#e3e5e8] font-normal">Descripción</th>
              <th aria-label="Vacía" />
            </tr>
          </thead>
          <tbody>
            <tr className="h-[19px] text-white">
              <td className="bg-[#3399ff]">10000</td>
              <td className="bg-[#3399ff]" />
              <td className="bg-[#3399ff]" />
              <td className="bg-[#3399ff]">
                <div className="flex items-center gap-[3px] pl-[2px]">
                  <span className="h-[15px] w-[15px] bg-[#40ff00]" />
                  47
                </div>
              </td>
              <td className="bg-[#3399ff] pl-px">Dudas</td>
              <td />
            </tr>
          </tbody>
        </table>
      </div>
    </section>
  )
}

function DatabaseFields() {
  return (
    <section className="flex min-h-0 flex-1 flex-col">
      <PanelTitle title="Campos de la base de datos" />
      <PanelBar>
        <Tools list="undoBold | magnifier" />
      </PanelBar>
      <div className="flex min-h-0 flex-1 flex-col gap-[3px] bg-[#dde0e8]">
        <div className="min-h-0 flex-1 border border-[#9a9a9a] bg-white">
          <h3 className="h-5 bg-[#f0f0f0] pl-[17px] leading-[18px] font-bold text-[#a6b1c2]">Atributos</h3>
        </div>
        <div className="h-[58px] shrink-0 border border-[#9a9a9a]" />
      </div>
    </section>
  )
}

function Tentatives() {
  return (
    <section className="flex min-h-0 flex-1 flex-col">
      <PanelTitle title="Tentativos" />
      <PanelBar>
        <Tools list="deleteRows" />
      </PanelBar>
      <div className="min-h-0 flex-1 bg-white">
        <div className="flex h-[23px] border-b border-[#d5d5d5] bg-linear-to-b from-white from-40% to-[#f3f4f6] to-40%">
          {[0, 1, 2, 3, 4].map((column) => (
            <span key={column} className="w-[10px] border-r border-[#dfe1e4]" />
          ))}
        </div>
      </div>
    </section>
  )
}

function StatusBar() {
  return (
    <footer className="flex h-5 shrink-0 items-center bg-[#293955] text-white">
      <div className="ml-[101px] flex h-4 items-center border-l border-white pl-[5px]">
        Selecciona el archivo de teclas activo
      </div>
      <svg width="12" height="12" viewBox="0 0 12 12" aria-hidden="true" className="mr-[2px] ml-auto self-end">
        <path
          d="M9 0h2v2h-2zM9 3h2v2h-2zM6 3h2v2h-2zM9 6h2v2h-2zM6 6h2v2h-2zM3 6h2v2h-2zM9 9h2v2h-2zM6 9h2v2h-2zM3 9h2v2h-2zM0 9h2v2h-2z"
          fill="#d5dcea"
        />
      </svg>
    </footer>
  )
}

export default function App() {
  return (
    <div className="flex h-screen flex-col overflow-hidden rounded-[6px] border border-[#1e1f24] bg-[linear-gradient(to_bottom,#b9bec8_0%,#8f95a2_5%,#f6f5f7_10%,#f6f5f7_87%,#4b5568_89%,#606a80_91%,#f4f4f6_93%)] pb-[6px] font-['Open_Sans','Noto_Sans',sans-serif] text-[11px] leading-4">
      <TitleBar />
      <div className="mx-[6px] flex min-h-0 flex-1 flex-col border border-[#5c626d] bg-[#2d3e5c]">
        <MenuBar />
        <Toolbars />
        <div className="flex min-h-0 flex-1 gap-1 py-[6px] pr-[6px]">
          <aside className="mr-[5px] flex w-[19px] shrink-0 flex-col gap-[3px]">
            <SideTab label="Cuadro de herramientas" icon="tools" className="h-[159px] pt-1" />
            <SideTab label="Buscar" icon="sheetBinoculars" className="h-[63px] pt-[2px]" />
            <SideTab label="Archivos de dibujo" className="h-[110px] pt-1" />
            <SideTab label="Visualización de códigos" className="h-[146px] pt-1" />
          </aside>
          <main className="flex min-w-0 flex-1 flex-col gap-1">
            <Drawing />
            <Tasks />
          </main>
          <aside className="flex w-[238px] shrink-0 flex-col gap-1">
            <ActiveCodes />
            <DatabaseFields />
            <Tentatives />
          </aside>
        </div>
        <StatusBar />
      </div>
    </div>
  )
}
